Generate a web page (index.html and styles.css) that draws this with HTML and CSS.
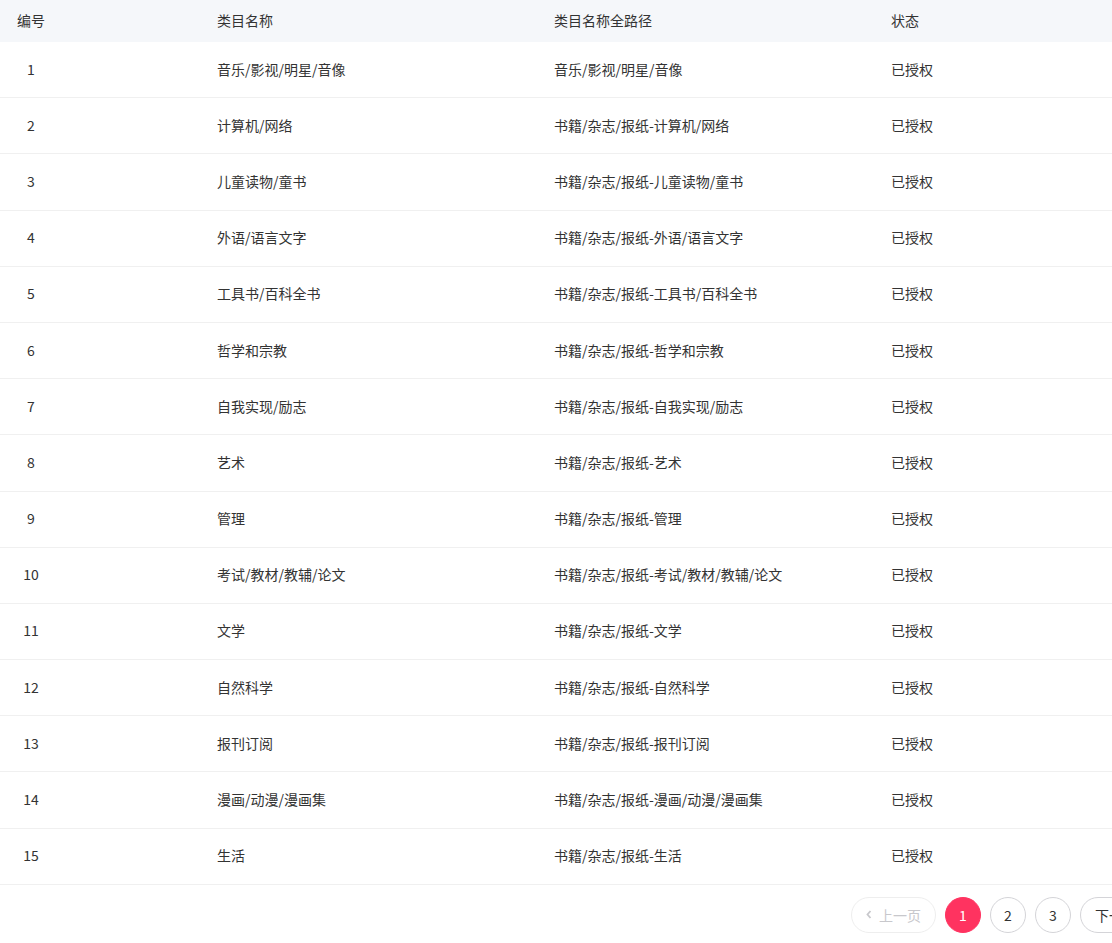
FILE: index.html
```html
<!DOCTYPE html>
<html>
<head>
    <meta charset="UTF-8">
    <title>类目授权</title>
    <link rel="stylesheet" href="styles.css">
</head>
<body>
    <div class="page">
        <div class="grid head">
            <div class="cell first">编号</div>
            <div class="cell">类目名称</div>
            <div class="cell">类目名称全路径</div>
            <div class="cell">状态</div>
        </div>
        <div class="grid row"><div class="cell first"><span class="num">1</span></div><div class="cell">音乐/影视/明星/音像</div><div class="cell">音乐/影视/明星/音像</div><div class="cell">已授权</div></div>
        <div class="grid row"><div class="cell first"><span class="num">2</span></div><div class="cell">计算机/网络</div><div class="cell">书籍/杂志/报纸-计算机/网络</div><div class="cell">已授权</div></div>
        <div class="grid row"><div class="cell first"><span class="num">3</span></div><div class="cell">儿童读物/童书</div><div class="cell">书籍/杂志/报纸-儿童读物/童书</div><div class="cell">已授权</div></div>
        <div class="grid row"><div class="cell first"><span class="num">4</span></div><div class="cell">外语/语言文字</div><div class="cell">书籍/杂志/报纸-外语/语言文字</div><div class="cell">已授权</div></div>
        <div class="grid row"><div class="cell first"><span class="num">5</span></div><div class="cell">工具书/百科全书</div><div class="cell">书籍/杂志/报纸-工具书/百科全书</div><div class="cell">已授权</div></div>
        <div class="grid row"><div class="cell first"><span class="num">6</span></div><div class="cell">哲学和宗教</div><div class="cell">书籍/杂志/报纸-哲学和宗教</div><div class="cell">已授权</div></div>
        <div class="grid row"><div class="cell first"><span class="num">7</span></div><div class="cell">自我实现/励志</div><div class="cell">书籍/杂志/报纸-自我实现/励志</div><div class="cell">已授权</div></div>
        <div class="grid row"><div class="cell first"><span class="num">8</span></div><div class="cell">艺术</div><div class="cell">书籍/杂志/报纸-艺术</div><div class="cell">已授权</div></div>
        <div class="grid row"><div class="cell first"><span class="num">9</span></div><div class="cell">管理</div><div class="cell">书籍/杂志/报纸-管理</div><div class="cell">已授权</div></div>
        <div class="grid row"><div class="cell first"><span class="num">10</span></div><div class="cell">考试/教材/教辅/论文</div><div class="cell">书籍/杂志/报纸-考试/教材/教辅/论文</div><div class="cell">已授权</div></div>
        <div class="grid row"><div class="cell first"><span class="num">11</span></div><div class="cell">文学</div><div class="cell">书籍/杂志/报纸-文学</div><div class="cell">已授权</div></div>
        <div class="grid row"><div class="cell first"><span class="num">12</span></div><div class="cell">自然科学</div><div class="cell">书籍/杂志/报纸-自然科学</div><div class="cell">已授权</div></div>
        <div class="grid row"><div class="cell first"><span class="num">13</span></div><div class="cell">报刊订阅</div><div class="cell">书籍/杂志/报纸-报刊订阅</div><div class="cell">已授权</div></div>
        <div class="grid row"><div class="cell first"><span class="num">14</span></div><div class="cell">漫画/动漫/漫画集</div><div class="cell">书籍/杂志/报纸-漫画/动漫/漫画集</div><div class="cell">已授权</div></div>
        <div class="grid row"><div class="cell first"><span class="num">15</span></div><div class="cell">生活</div><div class="cell">书籍/杂志/报纸-生活</div><div class="cell">已授权</div></div>

        <div class="pager">
            <span class="btn wide disabled"><svg class="chev" width="6" height="9" viewBox="0 0 6 9"><path d="M4.5 1 L1.5 4.5 L4.5 8" fill="none" stroke="currentColor" stroke-width="1.8"/></svg>上一页</span>
            <span class="btn active">1</span>
            <span class="btn">2</span>
            <span class="btn">3</span>
            <span class="btn wide">下一页<svg class="chev right" width="6" height="9" viewBox="0 0 6 9"><path d="M1.5 1 L4.5 4.5 L1.5 8" fill="none" stroke="currentColor" stroke-width="1.8"/></svg></span>
        </div>
    </div>
</body>
</html>
```

FILE: styles.css
```css
html,
body {
    margin: 0;
    padding: 0;
    background-color: #fff;
    overflow: hidden;
}

body {
    color: #333;
    font-family: "Microsoft YaHei", "Noto Sans CJK SC", "Noto Sans", sans-serif;
    font-size: 14px;
}

.page {
    width: 1228px;
}

.grid {
    display: grid;
    grid-template-columns: 217px 337px 337px 337px;
    box-sizing: border-box;
}

.head {
    height: 42px;
    background-color: #f5f7fa;
}

.row {
    height: 56.2px;
    border-bottom: 1px solid #f0f0f0;
}

.cell {
    display: flex;
    align-items: center;
    white-space: nowrap;
    padding-bottom: 2px;
}

.first {
    padding-left: 17px;
}

.num {
    display: inline-block;
    width: 28px;
    text-align: center;
}

.pager {
    display: flex;
    gap: 9px;
    margin-top: 12px;
    padding-left: 851px;
}

.btn {
    display: inline-flex;
    align-items: center;
    justify-content: center;
    box-sizing: border-box;
    width: 36px;
    height: 36px;
    border: 1px solid #d4d4d8;
    border-radius: 18px;
    color: #333;
    font-size: 14px;
}

.btn.wide {
    width: 85px;
}

.btn.disabled {
    border-color: #eeeeee;
    color: #c8c8cc;
}

.btn.active {
    background-color: #ff3360;
    border-color: #ff3360;
    color: #fff;
}

.chev {
    margin-right: 7px;
}

.chev.right {
    margin: 0 0 0 7px;
}
```
